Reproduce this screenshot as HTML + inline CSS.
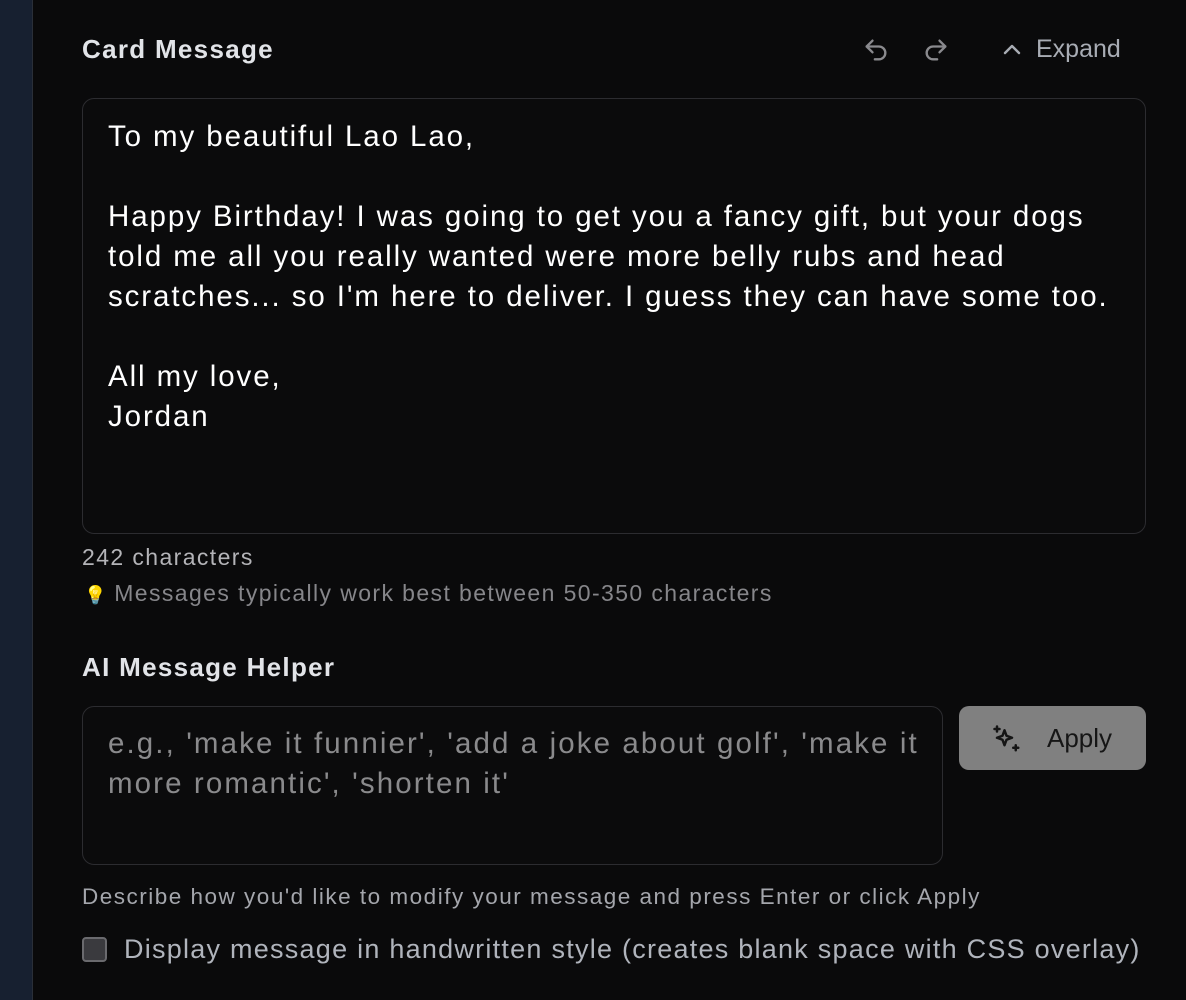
<!DOCTYPE html>
<html><head><style>
*{margin:0;padding:0;box-sizing:border-box}
body{width:1186px;height:1000px;background:#0a0a0b;font-family:"Liberation Sans",sans-serif;position:relative;overflow:hidden}
.side{position:absolute;left:0;top:0;width:33px;height:1000px;background:#172030;border-right:1px solid #2a2f38}
.abs{position:absolute;white-space:nowrap}
.h{color:#e2e4e8;font-size:26px;font-weight:bold;letter-spacing:1.3px}
.ta{position:absolute;border:1.5px solid #2c2c30;border-radius:12px;background:#0b0b0c}
</style></head><body>
<div class="side"></div>
<div class="abs h" style="left:82px;top:34px">Card Message</div>
<svg class="abs" style="left:862px;top:36px" width="28" height="28" viewBox="0 0 24 24" fill="none" stroke="#8a8a8e" stroke-width="2" stroke-linecap="round" stroke-linejoin="round"><path d="M9 14 4 9l5-5"/><path d="M4 9h10.5a5.5 5.5 0 0 1 0 11H11"/></svg>
<svg class="abs" style="left:922px;top:36px" width="28" height="28" viewBox="0 0 24 24" fill="none" stroke="#8a8a8e" stroke-width="2" stroke-linecap="round" stroke-linejoin="round"><path d="m15 14 5-5-5-5"/><path d="M20 9H9.5a5.5 5.5 0 0 0 0 11H13"/></svg>
<svg class="abs" style="left:1000px;top:38px" width="24" height="24" viewBox="0 0 24 24" fill="none" stroke="#a8acb4" stroke-width="2.4" stroke-linecap="round" stroke-linejoin="round"><path d="m5 15 7-7 7 7"/></svg>
<div class="abs" style="left:1036px;top:35px;font-size:25px;color:#a8acb4">Expand</div>
<div class="ta" style="left:82px;top:98px;width:1064px;height:436px"></div>
<div class="abs" style="left:108px;top:117px;font-size:29.5px;line-height:40px;color:#fff;letter-spacing:1.9px">To my beautiful Lao Lao,<br><br>Happy Birthday! I was going to get you a fancy gift, but your dogs<br>told me all you really wanted were more belly rubs and head<br>scratches... so I'm here to deliver. I guess they can have some too.<br><br>All my love,<br>Jordan</div>
<div class="abs" style="left:82px;top:544px;font-size:23px;color:#b4b4b8;letter-spacing:1.4px">242 characters</div>
<div class="abs" style="left:84px;top:580px;font-size:23px;color:#86868a;letter-spacing:1.4px"><span style="font-size:18px;letter-spacing:0">💡</span> Messages typically work best between 50-350 characters</div>
<div class="abs h" style="left:82px;top:652px">AI Message Helper</div>
<div class="ta" style="left:82px;top:706px;width:861px;height:159px"></div>
<div class="abs" style="left:108px;top:724px;font-size:29.5px;line-height:40px;color:#8a8a8c;letter-spacing:2.1px">e.g., 'make it funnier', 'add a joke about golf', 'make it<br>more romantic', 'shorten it'</div>
<div class="abs" style="left:959px;top:706px;width:187px;height:64px;background:#808080;border-radius:10px"></div>
<svg class="abs" style="left:992px;top:724px" width="30" height="30" viewBox="0 0 24 24" fill="none" stroke="#151515" stroke-width="2" stroke-linecap="round" stroke-linejoin="round"><path d="M10 5l1.6 4.4L16 11l-4.4 1.6L10 17l-1.6-4.4L4 11l4.4-1.6z"/><path d="M4 2v4M2 4h4M19 17v4M17 19h4"/></svg>
<div class="abs" style="left:1047px;top:723px;font-size:26px;color:#161616">Apply</div>
<div class="abs" style="left:82px;top:884px;font-size:22.5px;color:#a4a6ac;letter-spacing:1.5px">Describe how you'd like to modify your message and press Enter or click Apply</div>
<div class="abs" style="left:82px;top:937px;width:25px;height:25px;border:2px solid #6a6a6e;border-radius:4px;background:#3a3a3e"></div>
<div class="abs" style="left:124px;top:934px;font-size:27px;color:#b0b4bc;letter-spacing:1.25px">Display message in handwritten style (creates blank space with CSS overlay)</div>
</body></html>
